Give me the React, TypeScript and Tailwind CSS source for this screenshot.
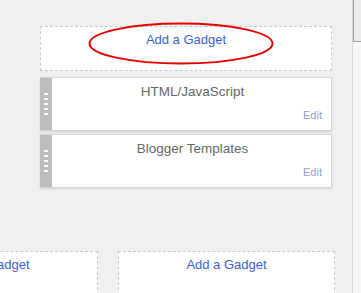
import React from 'react';

const font = { fontFamily: '"Liberation Sans", Arial, sans-serif' };

function Handle() {
  return (
    <div className="w-[12px] shrink-0 bg-[#bcbcbc] flex flex-col items-center justify-center gap-[3px]">
      {[0, 1, 2, 3, 4].map((i) => (
        <div key={i} className="w-[4px] h-[2px] bg-white" />
      ))}
    </div>
  );
}

function Widget({ title }: { title: string }) {
  return (
    <div className="flex h-[54px] bg-white border border-[#d4d4d4] border-l-0 shadow-[0_1px_2px_rgba(0,0,0,0.12)]">
      <Handle />
      <div className="flex-1 flex flex-col pt-[6px] pb-[9px] pl-[2px]">
        <div className="text-center text-[13.5px] leading-4 text-[#666]">{title}</div>
        <div className="mt-auto pr-[9px] text-right text-[11px] leading-3 text-[#9a9ad6]">Edit</div>
      </div>
    </div>
  );
}

function AddGadget({ className, children }: { className: string; children?: React.ReactNode }) {
  return (
    <div className={`relative bg-white border border-dashed border-[#c8c8c8] pt-[5px] text-center text-[13px] leading-4 text-[#3a5fd8] ${className}`}>
      Add a Gadget
      {children}
    </div>
  );
}

export default function App() {
  return (
    <div className="w-[361px] h-[293px] bg-[#f0f0f0] flex overflow-hidden" style={font}>
      <div className="flex-1 flex flex-col pt-[26px] overflow-hidden">
        <div className="ml-[40px] w-[292px] flex flex-col">
          <AddGadget className="h-[45px]">
            <svg className="absolute left-[47px] top-[-5px]" width="186" height="43" viewBox="0 0 186 43">
              <ellipse cx="93" cy="21.5" rx="91.5" ry="20" fill="none" stroke="#e60000" strokeWidth="2" />
            </svg>
          </AddGadget>
          <div className="mt-[6px] flex flex-col gap-[3px]">
            <Widget title="HTML/JavaScript" />
            <Widget title="Blogger Templates" />
          </div>
        </div>
        <div className="mt-[63px] ml-[-119px] flex gap-[20px]">
          <AddGadget className="w-[217px] h-[60px] shrink-0" />
          <AddGadget className="w-[217px] h-[60px] shrink-0" />
        </div>
      </div>
      <div className="w-[9px] shrink-0 border-l border-[#d8d8d8] bg-[#f6f6f6] flex flex-col">
        <div className="h-[42px] bg-[#ececec] border-l border-b border-[#a0a0a0]" />
      </div>
    </div>
  );
}
